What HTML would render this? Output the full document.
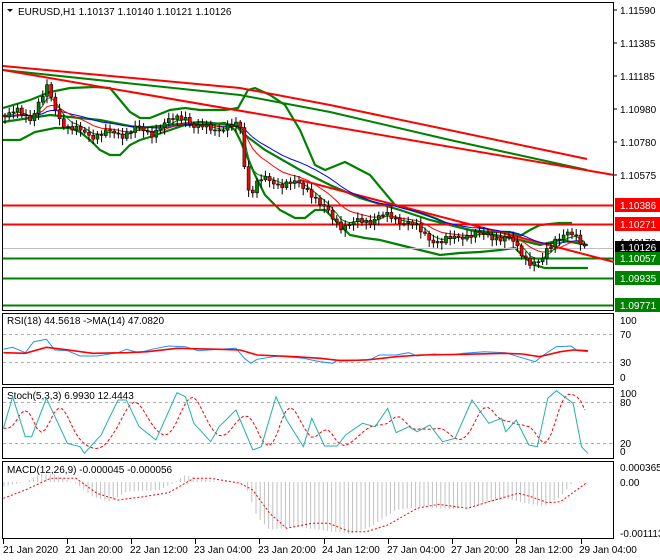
<!DOCTYPE html>
<html><head><meta charset="utf-8"><style>
html,body{margin:0;padding:0;background:#fff;width:660px;height:560px;overflow:hidden}
svg{display:block}
text{font-family:"Liberation Sans",sans-serif;font-size:10px;fill:#000}
</style></head><body>
<svg id="s" width="660" height="560" xmlns="http://www.w3.org/2000/svg">
<rect x="0" y="0" width="660" height="560" fill="#fff"/>
<!-- panel borders -->
<rect x="2.5" y="2.5" width="611" height="308" fill="none" stroke="#000"/>
<rect x="2.5" y="313.5" width="611" height="71" fill="none" stroke="#000"/>
<rect x="2.5" y="387.5" width="611" height="71" fill="none" stroke="#000"/>
<rect x="2.5" y="461.5" width="611" height="77" fill="none" stroke="#000"/>
<g id="main"></g>
<!-- horizontal levels -->
<line x1="3" y1="205.5" x2="613" y2="205.5" stroke="#f00" stroke-width="2"/>
<line x1="3" y1="224.5" x2="613" y2="224.5" stroke="#f00" stroke-width="2"/>
<line x1="3" y1="248.5" x2="613" y2="248.5" stroke="#c0c0c0" stroke-width="1"/>
<line x1="3" y1="258.5" x2="613" y2="258.5" stroke="#008000" stroke-width="2"/>
<line x1="3" y1="278.5" x2="613" y2="278.5" stroke="#008000" stroke-width="2"/>
<line x1="3" y1="305.5" x2="613" y2="305.5" stroke="#008000" stroke-width="2"/>
<!-- trend lines -->
<polyline points="3,66 240,88 330,105 587,159" fill="none" stroke="#f00" stroke-width="2"/>
<polyline points="3,70 240,95 330,112 450,140 587,170" fill="none" stroke="#008000" stroke-width="2"/>
<polyline points="3,70 614,175" fill="none" stroke="#f00" stroke-width="2"/>
<polyline points="300,180 614,262" fill="none" stroke="#f00" stroke-width="2"/>
<g id="overlay"></g>
<!-- main title -->
<path d="M7,9 L13,9 L10,12 Z" fill="#000"/>
<text x="18" y="15">EURUSD,H1  1.10137 1.10140 1.10121 1.10126</text>
<!-- right axis main -->
<g>
<line x1="613" y1="10" x2="617" y2="10" stroke="#000"/><text x="620" y="14">1.11590</text>
<line x1="613" y1="43" x2="617" y2="43" stroke="#000"/><text x="620" y="47">1.11385</text>
<line x1="613" y1="76" x2="617" y2="76" stroke="#000"/><text x="620" y="80">1.11185</text>
<line x1="613" y1="109" x2="617" y2="109" stroke="#000"/><text x="620" y="113">1.10980</text>
<line x1="613" y1="142" x2="617" y2="142" stroke="#000"/><text x="620" y="146">1.10780</text>
<line x1="613" y1="175" x2="617" y2="175" stroke="#000"/><text x="620" y="179">1.10575</text>
<text x="620" y="246">1.10170</text>
<text x="620" y="279">1.09978</text>
<rect x="615" y="198" width="45" height="14" fill="#f00"/><text x="620" y="209" style="fill:#fff">1.10386</text>
<rect x="615" y="217" width="45" height="14" fill="#f00"/><text x="620" y="228" style="fill:#fff">1.10271</text>
<rect x="615" y="241" width="45" height="13" fill="#000"/><text x="620" y="251" style="fill:#fff">1.10126</text>
<rect x="615" y="252" width="45" height="13" fill="#008000"/><text x="620" y="262" style="fill:#fff">1.10057</text>
<rect x="615" y="271" width="45" height="14" fill="#008000"/><text x="620" y="282" style="fill:#fff">1.09935</text>
<rect x="615" y="298" width="45" height="14" fill="#008000"/><text x="620" y="309" style="fill:#fff">1.09771</text>
</g>
<!-- RSI -->
<line x1="3" y1="334.5" x2="613" y2="334.5" stroke="#aaa" stroke-dasharray="3,3"/>
<line x1="3" y1="362.5" x2="613" y2="362.5" stroke="#aaa" stroke-dasharray="3,3"/>
<text x="7" y="324">RSI(18) 44.5618  -&gt;MA(14) 47.0820</text>
<text x="620" y="324">100</text><text x="620" y="338">70</text><text x="620" y="366">30</text><text x="620" y="381">0</text>
<!-- Stoch -->
<line x1="3" y1="402.5" x2="613" y2="402.5" stroke="#aaa" stroke-dasharray="3,3"/>
<line x1="3" y1="443.5" x2="613" y2="443.5" stroke="#aaa" stroke-dasharray="3,3"/>
<text x="7" y="399">Stoch(5,3,3) 6.9930 12.4443</text>
<text x="620" y="397">100</text><text x="620" y="406">80</text><text x="620" y="447">20</text><text x="620" y="455">0</text>
<!-- MACD -->
<text x="7" y="473">MACD(12,26,9) -0.000045 -0.000056</text>
<text x="620" y="471">0.000365</text><text x="620" y="486">0.00</text><text x="620" y="537">-0.001113</text>
<g id="ind"></g>
<!-- time axis -->
<g stroke="#000">
<line x1="3.5" y1="539" x2="3.5" y2="544"/><line x1="67.5" y1="539" x2="67.5" y2="544"/><line x1="131.5" y1="539" x2="131.5" y2="544"/><line x1="195.5" y1="539" x2="195.5" y2="544"/><line x1="259.5" y1="539" x2="259.5" y2="544"/><line x1="324.5" y1="539" x2="324.5" y2="544"/><line x1="388.5" y1="539" x2="388.5" y2="544"/><line x1="452.5" y1="539" x2="452.5" y2="544"/><line x1="516.5" y1="539" x2="516.5" y2="544"/><line x1="581.5" y1="539" x2="581.5" y2="544"/>
</g>
<text x="3" y="553">21 Jan 2020</text>
<text x="65" y="553">21 Jan 20:00</text>
<text x="130" y="553">22 Jan 12:00</text>
<text x="194" y="553">23 Jan 04:00</text>
<text x="258" y="553">23 Jan 20:00</text>
<text x="322" y="553">24 Jan 12:00</text>
<text x="387" y="553">27 Jan 04:00</text>
<text x="451" y="553">27 Jan 20:00</text>
<text x="515" y="553">28 Jan 12:00</text>
<text x="579" y="553">29 Jan 04:00</text>
</svg>
<script>
var NS="http://www.w3.org/2000/svg";
function el(p,t,a){var e=document.createElementNS(NS,t);for(var k in a)e.setAttribute(k,a[k]);p.appendChild(e);return e;}
function interp(pts,x){if(x<=pts[0][0])return pts[0][1];for(var i=1;i<pts.length;i++){if(x<=pts[i][0]){var a=pts[i-1],b=pts[i];return a[1]+(b[1]-a[1])*(x-a[0])/(b[0]-a[0]);}}return pts[pts.length-1][1];}
function pl(g,pts,col,w,dash){var a={points:pts.map(function(p){return p[0].toFixed(1)+","+p[1].toFixed(1)}).join(" "),fill:"none",stroke:col,"stroke-width":w};if(dash)a["stroke-dasharray"]=dash;el(g,"polyline",a);}
function zc(arr){return arr.map(function(p){return [p[0]/2.373,310+p[1]/3];});}
var main=document.getElementById("main"),ov=document.getElementById("overlay"),ind=document.getElementById("ind");
// Bollinger
var up=[[3,108],[30,100],[50,92],[70,88],[95,87],[110,88],[120,100],[130,112],[140,118],[150,118],[170,110],[185,108],[200,110],[225,110],[238,108],[248,90],[255,88],[270,95],[285,105],[300,130],[315,165],[325,170],[345,162],[370,175],[395,205],[420,213],[435,218],[450,225],[470,230],[490,232],[510,232],[520,236],[530,230],[540,225],[560,223],[572,223]];
var lo=[[3,140],[20,140],[35,132],[55,128],[70,128],[80,132],[90,140],[100,150],[110,155],[120,155],[130,145],[140,140],[150,137],[170,130],[185,125],[200,125],[225,123],[235,130],[240,140],[255,175],[265,195],[280,210],[295,218],[305,218],[315,210],[325,210],[340,225],[350,235],[365,238],[380,240],[400,245],[420,250],[440,255],[460,253],[480,252],[500,250],[515,248],[525,258],[535,265],[545,268],[588,268]];
var mid=[[3,122],[50,115],[100,120],[140,128],[200,122],[235,125],[245,135],[265,150],[300,170],[330,185],[360,198],[400,210],[430,220],[470,230],[520,240],[540,245],[560,240],[588,245]];
pl(main,up,"#008000",2.2);pl(main,lo,"#008000",2.2);pl(main,mid,"#008000",2.2);
// price
var kp=[[3,115],[15,112],[30,118],[40,100],[48,88],[55,110],[65,125],[75,130],[90,135],[105,133],[120,135],[135,128],[150,135],[160,125],[175,120],[185,115],[195,128],[210,128],[230,128],[240,125],[245,170],[250,195],[255,185],[262,180],[280,183],[300,185],[310,190],[320,205],[330,215],[340,225],[350,225],[360,222],[370,220],[380,215],[390,218],[400,220],[410,222],[420,232],[430,238],[440,242],[450,240],[460,235],[475,235],[490,235],[500,238],[510,240],[520,250],[530,262],[540,265],[545,255],[550,245],[555,238],[562,235],[570,235],[578,240],[585,245],[588,247]];
var cl=[],xs=[],prev=interp(kp,3);
for(var x=5;x<=588;x+=4.2){var c=interp(kp,x)+3*Math.sin(x*1.7)+2*Math.sin(x*0.63);xs.push(x);cl.push([prev,c]);prev=c;}
var e1=[],e2=[],e3=[],a1=cl[0][1],a2=a1,a3=a1;
for(var i=0;i<cl.length;i++){var c=cl[i][1];a1+=(c-a1)*0.07;a2+=(c-a2)*0.15;a3+=(c-a3)*0.35;e1.push([xs[i],a1]);e2.push([xs[i],a2]);e3.push([xs[i],a3]);}
pl(ov,e1,"#0000ff",1);pl(ov,e2,"#ff0000",1);pl(ov,e3,"#008000",1);
for(var i=0;i<cl.length;i++){var o=cl[i][0],c=cl[i][1],x=xs[i];var hi=Math.min(o,c)-2-Math.abs(4*Math.sin(i*2.3)),lw=Math.max(o,c)+2+Math.abs(5*Math.cos(i*1.9));
el(ov,"line",{x1:x,y1:hi,x2:x,y2:lw,stroke:"#000","stroke-width":1});
var t=Math.min(o,c),h=Math.max(Math.abs(o-c),1);
el(ov,"rect",{x:x-1.5,y:t,width:3,height:h,fill:(c<o?"#008000":"#ff0000"),stroke:"#000","stroke-width":0.6});}
// RSI
pl(ind,zc([[8,118],[30,112],[60,128],[80,95],[110,88],[130,120],[160,122],[190,138],[230,138],[280,128],[300,118],[330,128],[360,118],[400,108],[440,110],[470,122],[520,118],[560,115],[580,145],[595,160],[610,148],[660,138],[720,145],[760,155],[790,160],[800,150],[850,150],[880,148],[900,135],[940,135],[970,128],[990,138],[1030,132],[1070,135],[1100,130],[1150,125],[1200,128],[1230,140],[1270,155],[1290,135],[1320,110],[1355,108],[1370,122],[1395,125]]),"#1e90ff",1);
pl(ind,zc([[8,128],[60,130],[110,112],[150,118],[220,130],[300,128],[350,125],[420,115],[520,118],[570,120],[610,135],[700,140],[760,145],[810,152],[870,150],[940,140],[1000,135],[1100,133],[1200,130],[1240,132],[1280,140],[1330,125],[1360,120],[1395,122]]),"#ff0000",1.6);
// Stoch
var st=[[8,355],[30,260],[60,380],[75,380],[110,265],[160,400],[190,410],[200,430],[240,375],[280,270],[300,270],[330,350],[370,390],[420,248],[440,260],[460,340],[500,395],[520,350],[560,300],[600,420],[620,410],[655,260],[680,330],[720,410],[740,325],[770,408],[800,408],[820,375],[860,340],[890,350],[920,295],[940,368],[970,350],[990,365],[1020,345],[1050,395],[1080,385],[1120,270],[1160,340],[1190,325],[1200,365],[1225,330],[1255,405],[1275,410],[1300,265],[1320,242],[1360,280],[1380,410],[1395,430]];
var sd=[];for(var x=8;x<=1395;x+=10){var s=0,n=0;for(var k=-30;k<=0;k+=10){s+=interp(st,x-15+k);n++;}sd.push([x,s/n]);}
pl(ind,zc(sd),"#ff0000",1,"3,2");
pl(ind,zc(st),"#20b2aa",1);
// MACD
var hist=[[8,530],[60,515],[100,490],[130,495],[180,520],[220,560],[260,575],[300,545],[380,540],[410,520],[440,495],[470,505],[520,515],[580,515],[610,620],[640,660],[700,650],[760,660],[830,672],[880,650],[940,600],[1000,590],[1070,598],[1120,590],[1200,565],[1250,580],[1290,590],[1330,560],[1360,515],[1395,515]];
var zy=482;
for(var x=4;x<=588;x+=4.2){var y=310+interp(hist,x*2.373)/3;el(ind,"line",{x1:x,y1:zy,x2:x,y2:y,stroke:"#c0c0c0","stroke-width":1});}
pl(ind,zc([[8,565],[60,540],[120,505],[180,505],[230,550],[280,570],[340,560],[400,548],[460,505],[500,505],[570,520],[600,540],[640,610],[680,655],[740,640],[780,640],[830,665],[870,665],[920,645],[990,595],[1040,583],[1110,595],[1160,575],[1230,550],[1260,560],[1300,578],[1330,575],[1390,520]]),"#ff0000",1,"2,2");
</script>
</body></html>
